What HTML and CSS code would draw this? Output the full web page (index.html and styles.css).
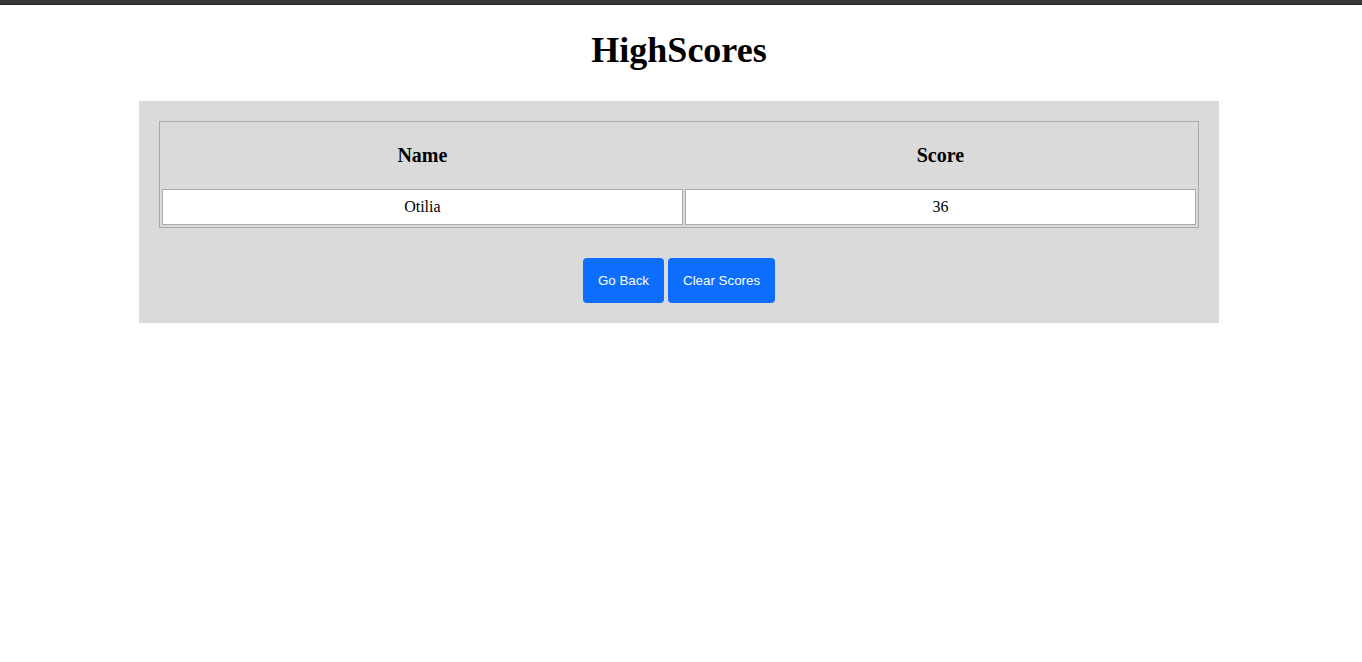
FILE: index.html
```html
<!DOCTYPE html>
<html lang="en">
<head>
<meta charset="utf-8">
<title>HighScores</title>
<link rel="stylesheet" href="styles.css">
</head>
<body>
<div class="topbar"></div>
<main class="page">
  <h1 class="title">HighScores</h1>
  <section class="panel">
    <table class="scores">
      <thead>
        <tr><th>Name</th><th>Score</th></tr>
      </thead>
      <tbody>
        <tr><td>Otilia</td><td>36</td></tr>
      </tbody>
    </table>
    <div class="actions">
      <button class="btn" type="button">Go Back</button>
      <button class="btn" type="button">Clear Scores</button>
    </div>
  </section>
</main>
</body>
</html>
```
FILE: styles.css
```css
html, body {
  margin: 0;
  padding: 0;
  background: #ffffff;
}
body {
  font-family: "Liberation Serif", "Times New Roman", serif;
  color: #000;
}
.topbar {
  height: 4px;
  background: #37383b;
  border-bottom: 1px solid #232425;
}
.page {
  padding-right: 4px;
}
.title {
  margin: 24px 0 30px;
  font-size: 36px;
  font-weight: bold;
  text-align: center;
  line-height: normal;
}
.panel {
  width: 1080px;
  margin: 0 auto;
  background: #dadada;
  padding: 20px 20px 20px;
  box-sizing: border-box;
}
.scores {
  width: 100%;
  border: 1px solid #aaaaaa;
  border-spacing: 2px;
  margin-bottom: 30px;
}
.scores th {
  font-size: 20px;
  font-weight: bold;
  padding: 20px 45px;
  line-height: 23px;
}
.scores td {
  background: #ffffff;
  border: 1px solid #aaaaaa;
  padding: 8px;
  font-size: 16px;
  line-height: 18px;
  text-align: center;
}
.actions {
  display: flex;
  justify-content: center;
  gap: 4px;
}
.btn {
  font-family: "Liberation Sans", Arial, sans-serif;
  font-size: 13.333px;
  line-height: 17px;
  color: #ffffff;
  background: #0d6efd;
  border: none;
  border-radius: 4px;
  padding: 14px 15px;
  height: 45px;
}
```
